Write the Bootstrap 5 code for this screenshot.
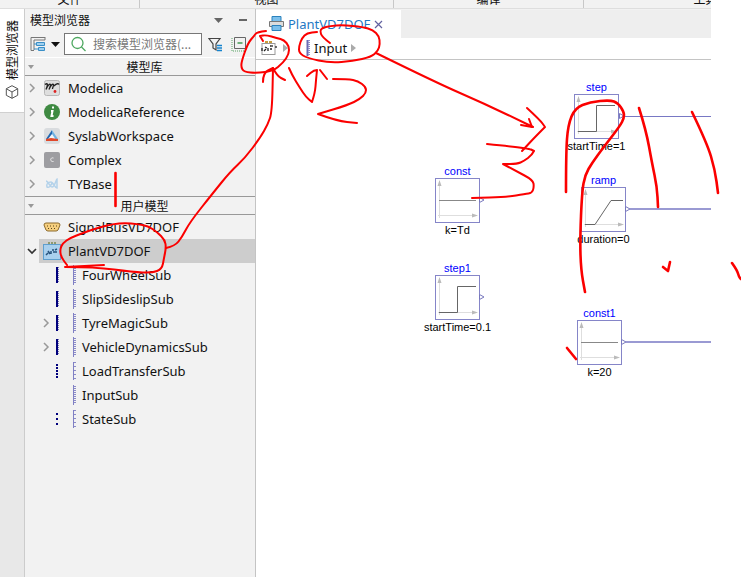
<!DOCTYPE html>
<html lang="zh-CN">
<head>
<meta charset="utf-8">
<meta name="viewport" content="width=device-width, initial-scale=1">
<title>PlantVD7DOF</title>
<link href="https://cdn.jsdelivr.net/npm/bootstrap@5.3.0/dist/css/bootstrap.min.css" rel="stylesheet">
<style>
body{font:13px/24px "Noto Sans","Noto Sans CJK SC",sans-serif;color:#111;background:#fff}
svg{display:block;flex:none}
button{border:0;background:none;padding:0;color:inherit;font:inherit}
.cjk{font-family:"Noto Sans CJK SC",sans-serif;font-size:12px}
.ribbon{height:9px;background:#f2f2f2;border-bottom:1px solid #dedede;margin-right:30px}
.ribbon button{line-height:16px;flex:none;height:17px;text-align:center;align-self:flex-end;padding-bottom:1px;border-right:1px solid #c8c8c8}
.g1{width:140px}.g2{width:254px}.g3{width:190px}.g4{width:244px}
.rail{width:25px;background:#e8e8e8;border-right:1px solid #ccc}
.railtab{height:104px;background:#fff;border-bottom:1px solid #d0d0d0!important;padding-top:11px!important;gap:5px}
.railtab span{writing-mode:vertical-rl;text-orientation:sideways;transform:rotate(180deg);line-height:20px}
.side{width:231px;background:#f2f2f2;border-right:1px solid #c4c4c4}
.titlebar{height:22px;padding:0 8px 0 5px}
.tools{height:26px;padding:0 7px 0 5px}
.search{width:138px;height:22px;border:1px solid #777;background:#fff;margin:0 6px 0 3px;padding-left:5px;gap:6px}
.search input{border:0;outline:0;width:104px;padding:0;background:none;line-height:20px}
.search input::placeholder{color:#777;opacity:1}
.sect{height:19px;border-top:1px solid #fff;border-bottom:1px solid #999;line-height:18px;padding-left:3px}
.sect.second{border-top-color:#999}
.trow{height:24px;display:flex;align-items:center;width:100%;text-align:left;line-height:24px}
.tw{width:14px;flex:none}
.body1{display:flex;align-items:center;flex:1;height:24px;padding-left:4px}
.body1 svg{margin-right:7px}
.picked{background:#cdcdcd}
.sub{padding-left:14px!important}
.sub .pin1{margin:0 14px 0 2px}
.sub .pin2{margin-right:5px}
.tabs{background:#eee;height:29px;margin-right:30px;border-top:1px solid #f2f2f2}
.doctab{width:145px;background:#fff;color:#1f78c4;padding-left:13px;gap:4px}
.crumbs{height:22px;border-bottom:1px solid #c4c4c4;margin-right:30px;padding:0 0 2px 5px}
.crumbs button:first-child{margin-right:6px}
.pinc{margin:0 4px 0 18px}
.sheet{position:relative;font-family:"Liberation Sans",Arial,sans-serif;font-size:11px;line-height:14px}
.blk{position:absolute;width:101px;text-align:center;color:#000}
.blk b{display:block;font-weight:400;color:#00f}
.blk svg{margin:0 auto;overflow:visible}
.b-step{left:290px;top:20px}.b-const{left:151px;top:104px}.b-ramp{left:297px;top:113px}
.b-step1{left:151px;top:201px}.b-const1{left:293px;top:246px}
.ink{position:absolute;left:0;top:0;pointer-events:none;fill:none;stroke:#fb0000;stroke-width:2;stroke-linecap:round;stroke-linejoin:round}
.ink .heavy{stroke-width:2.6}
</style>
<script src="https://cdn.jsdelivr.net/npm/bootstrap@5.3.0/dist/js/bootstrap.bundle.min.js"></script>
</head>
<body class="vh-100 d-flex flex-column overflow-hidden position-relative">
<svg width="0" height="0" class="position-absolute">
<defs>
<symbol id="chev" viewBox="0 0 14 14"><path d="M5 3l4 4-4 4" fill="none" stroke="#999" stroke-width="1.500"/></symbol>
<symbol id="axes" viewBox="0 0 45 45"><rect x=".5" y=".5" width="44" height="44" fill="#fff" stroke="#8585c8"/><path d="M4.500 40V5M3 37.500h34" stroke="#dedede" fill="none"/><path d="M2.500 8l2-6 2 6zM37 35.500l6 2-6 2z" fill="#bbb"/></symbol>
<symbol id="port" viewBox="0 0 6 6"><path d="M.5.5L5 3 .5 5.500z" fill="#fff" stroke="#7777bd"/></symbol>
<symbol id="pinD" viewBox="0 0 4 18"><path d="M2 1v16" stroke="#00007c" stroke-width="2"/><path d="M3.500 1v16" stroke="#00007c" stroke-dasharray="1 1" stroke-opacity=".5"/></symbol>
<symbol id="pinM" viewBox="0 0 4 18"><path d="M2 2v15" stroke="#00007c" stroke-width="2" stroke-dasharray="2 1"/></symbol>
<symbol id="pinL" viewBox="0 0 4 18"><path d="M2 3v13" stroke="#00007c" stroke-width="2" stroke-dasharray="2 3"/></symbol>
<symbol id="pinT" viewBox="0 0 4 20"><path d="M.5 0v20" stroke="#8080c4"/><path d="M2 1v18" stroke="#8c8cc8" stroke-width="2" stroke-dasharray="1 1"/></symbol>
<symbol id="pinS" viewBox="0 0 4 20"><path d="M.5 1v18" stroke="#8080c4"/><path d="M2 1v18" stroke="#8c8cc8" stroke-width="2" stroke-dasharray="1 3"/></symbol>
</defs>
</svg>

<nav class="ribbon d-flex overflow-hidden cjk">
<button class="g1">文件</button><button class="g2">视图</button><button class="g3">编译</button><button class="g4">工具</button>
</nav>

<div class="d-flex flex-grow-1">
<aside class="rail flex-shrink-0">
<button class="railtab w-100 d-flex flex-column align-items-center cjk"><span>模型浏览器</span>
<svg width="14" height="14" viewBox="0 0 14 14" fill="none" stroke="#555"><path d="M7 .7l5.700 3v6.600L7 13.300l-5.700-3V3.700zM1.300 3.700L7 7l5.700-3.300M7 7v6.300"/></svg></button>
</aside>

<section class="side flex-shrink-0">
<div class="titlebar d-flex align-items-center cjk"><span class="me-auto">模型浏览器</span>
<button aria-label="菜单" class="me-3"><svg width="9" height="5"><path d="M0 0h9L4.500 5z" fill="#666"/></svg></button>
<button aria-label="最小化"><svg width="8" height="2"><path d="M0 1h8" stroke="#666" stroke-width="2"/></svg></button></div>
<div class="tools d-flex align-items-center">
<button aria-label="视图"><svg width="16" height="16" viewBox="0 0 16 16"><path d="M15 1.500H1v13h3M15 1v3H4v10" fill="none" stroke="#777"/><path d="M6.500 6.500h8v3h-8zM8.500 11.500h6v3h-6z" fill="#9fd0ef" stroke="#3a8fc7"/><path d="M4 8h2M4 13h4" stroke="#3a8fc7"/></svg></button>
<button aria-label="更多" class="ms-1"><svg width="11" height="6"><path d="M1 1h9L5.500 6z" fill="#111"/></svg></button>
<div class="search d-flex align-items-center cjk">
<svg width="17" height="17" viewBox="0 0 17 17" fill="none" stroke="#4ea860" stroke-width="1.300"><circle cx="7.500" cy="7" r="5.500"/><path d="M11.500 11l4 4"/></svg>
<input type="text" aria-label="搜索模型浏览器" placeholder="搜索模型浏览器(..."></div>
<button aria-label="筛选" class="me-2"><svg width="15" height="15" viewBox="0 0 15 15" fill="none"><path d="M1 1.500h11L8 7v6l-3-2V7z" stroke="#444" stroke-width="1.200"/><path d="M9 8.500h5M9 11h5M9 13.500h5" stroke="#1684ce" stroke-width="1.500"/></svg></button>
<button aria-label="全部折叠"><svg width="16" height="16" viewBox="0 0 16 16" fill="none"><path d="M1 2v13h13" stroke="#5aa566" stroke-dasharray="1 1"/><path d="M3.500 1.500h11v11h-11z" stroke="#666"/><path d="M6.500 7h5" stroke="#3f9a50" stroke-width="1.500"/></svg></button>
</div>
<div class="sect d-flex align-items-center cjk"><svg width="6" height="4"><path d="M0 0h6L3 4z" fill="#999"/></svg><span class="flex-grow-1 text-center">模型库</span></div>
<div>
<button class="trow"><svg class="tw" height="14"><use href="#chev"/></svg><span class="body1"><svg width="18" height="18" viewBox="0 0 18 18"><rect x="1.500" y="1.500" width="15" height="15" rx="2" fill="#dedede" stroke="#b7b7b7"/><path d="M2 5.500c3-2 3 0 1 5 2-5 4-6 4.500-5 .5 1-1 3-1.500 5 2-5 4-6 4.500-5 .5 1-1 3-1 4.500M11 7c2-2 4-3 5-1.500" fill="none" stroke="#222" stroke-width="1.300"/><circle cx="12" cy="12.500" r="1.400" fill="#d22"/></svg>Modelica</span></button>
<button class="trow"><svg class="tw" height="14"><use href="#chev"/></svg><span class="body1"><svg width="18" height="18" viewBox="0 0 18 18"><circle cx="9" cy="9" r="8" fill="#3f8a42"/><path d="M10 3.500v2M8 8h1.500l-1 5h2" stroke="#fff" stroke-width="2" fill="none"/></svg>ModelicaReference</span></button>
<button class="trow"><svg class="tw" height="14"><use href="#chev"/></svg><span class="body1"><svg width="18" height="18" viewBox="0 0 18 18"><rect x="1" y="1" width="16" height="16" rx="3" fill="#d9dcdf"/><path d="M9 3l6 10H3z" fill="#f4f7fa"/><path d="M9 3l6 9-2 1-4-6z" fill="#6fb1e2"/><path d="M9 3L3 12l2 0 4-5z" fill="#2267b0"/><path d="M3 12l5-1 7 1v2H3z" fill="#e0482a"/></svg>SyslabWorkspace</span></button>
<button class="trow"><svg class="tw" height="14"><use href="#chev"/></svg><span class="body1"><svg width="18" height="18" viewBox="0 0 18 18"><rect x="1" y="1" width="16" height="16" rx="2" fill="#9d9da1"/><path d="M10.500 7c-3-1-4 3-1 3.500h1" fill="none" stroke="#eee"/></svg>Complex</span></button>
<button class="trow"><svg class="tw" height="14"><use href="#chev"/></svg><span class="body1"><svg width="18" height="18" viewBox="0 0 18 18" fill="none" stroke="#b4d2ea" stroke-width="1.500"><path d="M3 6c2 0 4 6 6 6 3 0 4-8 5-8v9c-2 0-4-6-6-6-3 0-5 2-4 5 2 1 4-1 5-4"/></svg>TYBase</span></button>
</div>
<div class="sect second d-flex align-items-center cjk"><svg width="6" height="4"><path d="M0 0h6L3 4z" fill="#999"/></svg><span class="flex-grow-1 text-center">用户模型</span></div>
<div>
<button class="trow"><span class="tw"></span><span class="body1"><svg width="18" height="18" viewBox="0 0 18 18"><path d="M3 5h12q2 0 2 2l-2 5q-1 1-2 1H5q-1 0-2-1L1 7q0-2 2-2z" fill="#f6cf7e" stroke="#8c6a2c"/><path d="M4 8h11M5 10.500h9" stroke="#5a451d" stroke-dasharray="1 2"/></svg>SignalBusVD7DOF</span></button>
<button class="trow"><svg class="tw" height="14"><path d="M3 5l4 4 4-4" fill="none" stroke="#333" stroke-width="1.700"/></svg><span class="body1 picked"><svg width="18" height="20" viewBox="0 0 18 20"><path d="M5 2.500h9" stroke="#8f9a70" stroke-width="3" stroke-dasharray="2 1"/><rect x=".5" y="3.500" width="17" height="15" fill="#a9d0ee" stroke="#5f9fce"/><path d="M3 14l2-2M5 10l2 3M8 13v-3M10 11l2 0M12 9l2-1M13 12v-2M9 9h2" stroke="#26527c" stroke-width="1.500" fill="none"/></svg>PlantVD7DOF</span></button>
<button class="trow sub"><span class="tw"></span><svg class="pin1" width="4" height="18"><use href="#pinD"/></svg><svg class="pin2" width="4" height="20"><use href="#pinT"/></svg>FourWheelSub</button>
<button class="trow sub"><span class="tw"></span><svg class="pin1" width="4" height="18"><use href="#pinD"/></svg><svg class="pin2" width="4" height="20"><use href="#pinT"/></svg>SlipSideslipSub</button>
<button class="trow sub"><svg class="tw" height="14"><use href="#chev"/></svg><svg class="pin1" width="4" height="18"><use href="#pinD"/></svg><svg class="pin2" width="4" height="20"><use href="#pinT"/></svg>TyreMagicSub</button>
<button class="trow sub"><svg class="tw" height="14"><use href="#chev"/></svg><svg class="pin1" width="4" height="18"><use href="#pinD"/></svg><svg class="pin2" width="4" height="20"><use href="#pinT"/></svg>VehicleDynamicsSub</button>
<button class="trow sub"><span class="tw"></span><svg class="pin1" width="4" height="18"><use href="#pinM"/></svg><svg class="pin2" width="4" height="20"><use href="#pinS"/></svg>LoadTransferSub</button>
<button class="trow sub"><span class="tw"></span><svg class="pin1" width="4" height="18"></svg><svg class="pin2" width="4" height="20"><use href="#pinT"/></svg>InputSub</button>
<button class="trow sub"><span class="tw"></span><svg class="pin1" width="4" height="18"><use href="#pinL"/></svg><svg class="pin2" width="4" height="20"><use href="#pinS"/></svg>StateSub</button>
</div>
</section>

<main class="flex-grow-1 d-flex flex-column">
<div class="tabs d-flex">
<div class="doctab d-flex align-items-center"><svg width="15" height="16" viewBox="0 0 15 16"><path d="M3 .5h9v5H3z" fill="#7cc0ec" stroke="#2b82bd"/><path d="M.5 5.500h14v5H.5z" fill="#ddd" stroke="#777"/><path d="M3 9.500h9v5H3z" fill="#7cc0ec" stroke="#2b82bd"/></svg><a href="#" class="text-reset text-decoration-none">PlantVD7DOF</a><button aria-label="关闭"><svg width="9" height="9"><path d="M1 1l7 7M8 1L1 8" stroke="#6262a0" stroke-width="1.200"/></svg></button></div>
</div>
<div class="crumbs d-flex align-items-center">
<button aria-label="PlantVD7DOF"><svg width="16" height="16" viewBox="0 0 16 16"><path d="M4 2h8" stroke="#c99d3c" stroke-width="2" stroke-dasharray="3 1"/><rect x="1" y="3.500" width="13" height="11" fill="#fff" stroke="#999"/><path d="M3 11l2-2M4 7l2 1M7 11V8M9 9h2M11 7V5M9 6h1M15 6v2M1 8v3" stroke="#222" stroke-width="1.300"/></svg></button>
<svg width="5" height="8"><path d="M0 0l5 4-5 4z" fill="#aaa"/></svg>
<svg class="pinc" width="4" height="16" viewBox="0 0 4 16"><path d="M1.500 0v16" stroke="#6a6ab4" stroke-width="2"/><path d="M3 0v16" stroke="#8c8cc8" stroke-width="2" stroke-dasharray="1 1"/></svg>
<a href="#" class="text-reset text-decoration-none me-1">Input</a>
<svg width="5" height="8"><path d="M0 0l5 4-5 4z" fill="#aaa"/></svg>
</div>
<div class="sheet flex-grow-1">
<div class="blk b-step"><b>step</b><svg width="45" height="45"><use href="#axes"/><path d="M4 37.500h18.500v-26H41" fill="none" stroke="#666"/><path d="M50 22.500h87" stroke="#7878c4"/><use href="#port" x="45" y="19" width="6" height="6"/></svg>startTime=1</div>
<div class="blk b-const"><b>const</b><svg width="45" height="45"><use href="#axes"/><path d="M4 22.500h37" stroke="#888"/><use href="#port" x="44" y="19" width="6" height="6"/></svg>k=Td</div>
<div class="blk b-ramp"><b>ramp</b><svg width="45" height="45"><use href="#axes"/><path d="M4 37.500h10l16-24h12" fill="none" stroke="#666"/><path d="M49 22h81" stroke="#7878c4" stroke-width="1.500"/><use href="#port" x="44" y="19" width="6" height="6"/></svg>duration=0</div>
<div class="blk b-step1"><b>step1</b><svg width="45" height="45"><use href="#axes"/><path d="M4 37.500h18.500v-26H41" fill="none" stroke="#666"/><use href="#port" x="44" y="19" width="6" height="6"/></svg>startTime=0.1</div>
<div class="blk b-const1"><b>const1</b><svg width="45" height="45"><use href="#axes"/><path d="M4 22.500h37" stroke="#888"/><path d="M49 22h85" stroke="#7878c4" stroke-width="1.500"/><use href="#port" x="44" y="19" width="6" height="6"/></svg>k=20</div>
</div>
</main>
</div>

<svg class="ink" id="ink" width="741" height="577" viewBox="0 0 741 577" aria-hidden="true"></svg>
<script>
// freehand strokes: flat x,y lists, smoothed through their midpoints
const strokes = [
 [104,265,65,267,95,267,133,272,152,273,162,269,164,258,166,248,165,240,157,232,148,226,137,224,125,223,113,224,97,228,83,233,70,238,63,243,60,249,61,257,67,265],
 [166,248,175,246,182,237,190,222,213,193,230,172,245,158,260,138,268,124,272,112,273,68],
 [263,82,263,73,273,68,277,76,285,80],
 [266,31,257,32,254,36,248,43,242,60,241,67,244,72,257,73,273,71,283,63,289,54,289,46,284,40,277,38,266,35,260,36,263,41],
 [289,68,292,75,300,88,306,97,312,102,315,93,316,80,317,70,314,70,307,76],
 [320,70,327,79],
 [333,79,348,79,358,81,366,87,366,93,360,99,348,105,318,114,337,121,357,123],
 [330,43,322,37,320,31,322,28,330,26,343,25,363,27,373,30,379,36,380,44,378,51,371,57,353,61,330,63,307,58,299,53,299,46,302,38,307,33,317,32],
 [376,53,437,83,483,103,533,127],
 [529,119,532,127,521,125],
 [527,108,540,120,545,127,535,137,522,151],
 [487,144,528,148,534,151,532,155,524,161,517,164,503,164,516,171,533,180,534,187,532,193,525,194,507,197,472,198],
 [566,192,566,153,568,125,575,108,590,102,610,100,618,103,624,112,624,118,620,126,603,148,592,163,585,175,582,192,580,240,581,270,585,292],
 [639,108,646,130,652,163,657,187,658,207],
 [692,112,707,143,715,170,718,193],
 [663,267,668,271,670,262],
 [732,263,737,270,739,277,741,279],
 [567,348,576,359],
 [115.5,173,115.5,206]
];
const heavyFrom = 12;
const corner = (a, b, c) => {
  const ux = b[0]-a[0], uy = b[1]-a[1], vx = c[0]-b[0], vy = c[1]-b[1];
  return (ux*vx + uy*vy) < 0.3 * Math.hypot(ux, uy) * Math.hypot(vx, vy);
};
document.getElementById('ink').innerHTML = strokes.map((s, n) => {
  const p = [];
  for (let i = 0; i < s.length; i += 2) p.push([s[i], s[i+1]]);
  let d = 'M' + p[0];
  for (let i = 1; i < p.length - 1; i++) {
    const m = [(p[i][0]+p[i+1][0])/2, (p[i][1]+p[i+1][1])/2];
    d += corner(p[i-1], p[i], p[i+1]) ? 'L' + p[i] : 'Q' + p[i] + ' ' + m;
  }
  return '<path' + (n >= heavyFrom ? ' class="heavy"' : '') + ' d="' + d + 'L' + p[p.length-1] + '"/>';
}).join('');
</script>
</body>
</html>
